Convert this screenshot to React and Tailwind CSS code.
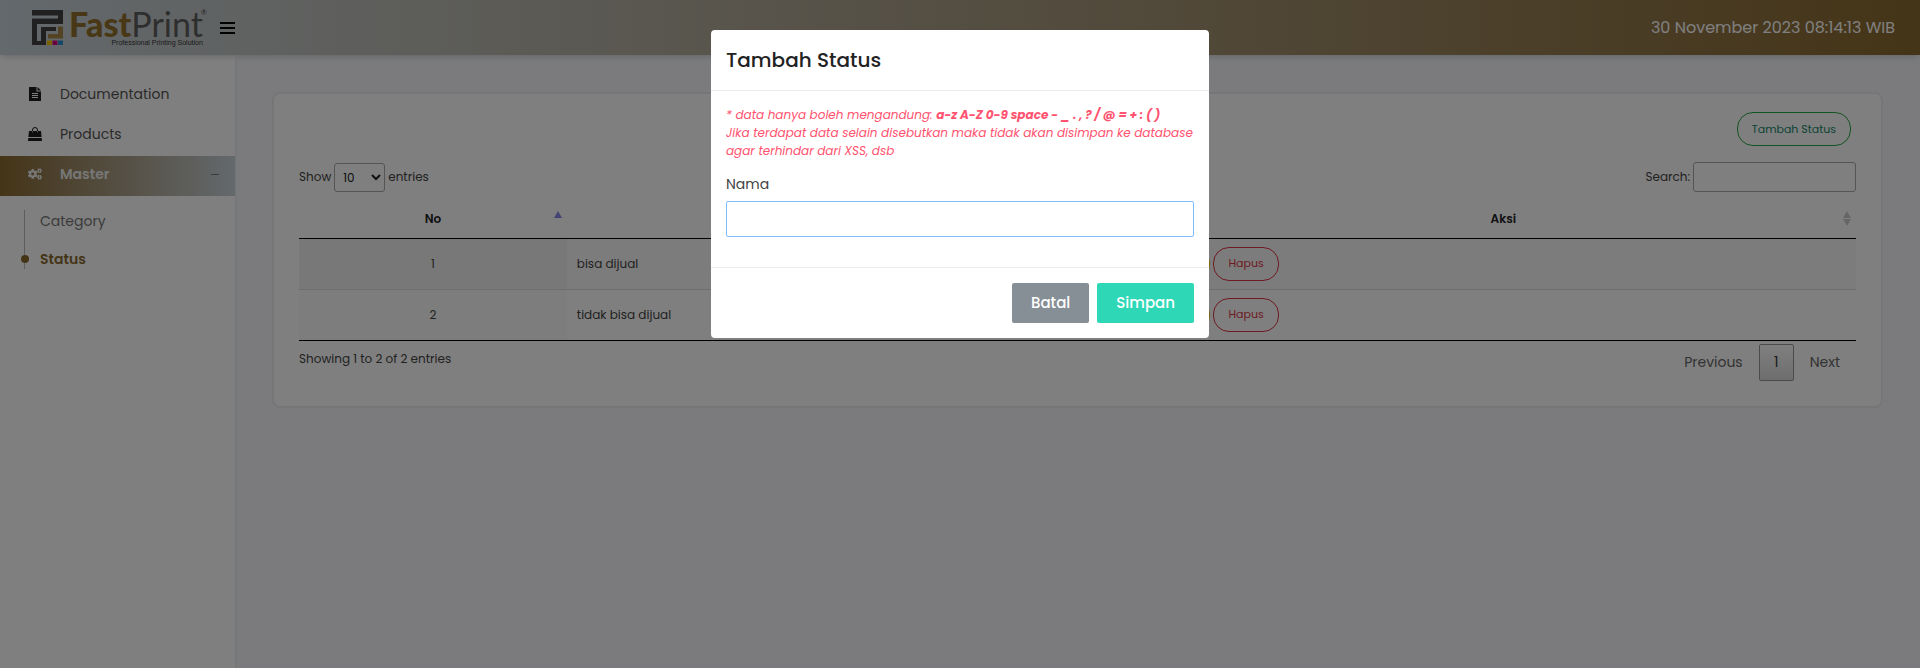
import { useState } from "react";
import { FaCogs } from "react-icons/fa";

function LogoMark() {
  return (
    <svg className="h-[35px] w-[31px]" viewBox="0 0 31 35" aria-hidden="true">
      <path fill="#424242" d="M0 0H31V14H5V31H9V17H24V21H14V35H0V8.500H26V5.500H0Z" />
      <path fill="#a8854a" d="M26 16.500H31V28.500H16V24H26Z" />
      <path fill="#f7c400" d="M15 30.500H20V35H15Z" />
      <path fill="#d6007e" d="M20.500 30.500H25.500V35H20.500Z" />
      <path fill="#2a8fd0" d="M26 30.500H31V35H26Z" />
    </svg>
  );
}

function Logo() {
  return (
    <a href="#" className="flex items-center gap-[6px] font-['Lato',sans-serif]">
      <LogoMark />
      <span className="relative flex flex-col">
        <span className="text-[34px] leading-[30px] text-[#5c5c5c]">
          <b className="font-black text-[#91702c]">Fast</b>Print
        </span>
        <span className="text-right font-['Liberation_Sans',sans-serif] text-[7px] leading-[8px] text-[#333]">
          Professional Printing Solution
        </span>
        <span className="absolute -right-[4px] -top-[1px] text-[7px] leading-[8px] text-[#444]">®</span>
      </span>
    </a>
  );
}

function FileIcon() {
  return (
    <svg className="h-[14px] w-[14px]" viewBox="0 0 14 14" aria-hidden="true">
      <path fill="#1c1c1c" d="M1.500 0H8.500V4.500H13V13.500Q13 14 12.500 14H1.500Q1 14 1 13.500V.500Q1 0 1.500 0ZM9.500 0L13 3.500H9.500Z" />
      <path stroke="#fff" d="M4 6.500H10M4 8.500H10M4 10.500H10" />
    </svg>
  );
}

function BagIcon() {
  return (
    <svg className="h-[14px] w-[14px]" viewBox="0 0 14 14" aria-hidden="true">
      <path fill="none" stroke="#1c1c1c" d="M4.500 5V3Q4.500 .500 7 .500Q9.500 .500 9.500 3V5" />
      <path fill="#1c1c1c" d="M1 4H13L13.600 10H.400ZM.300 11H13.700L14 14H0Z" />
      <path stroke="#fff" strokeWidth=".6" d="M4.500 4V5.500M9.500 4V5.500" />
    </svg>
  );
}

function Header() {
  return (
    <header className="relative z-10 flex h-[55px] items-center justify-between bg-linear-to-r from-[#c8d2d9] to-[#8a6a2f] pl-8 pr-[25px] shadow-md">
      <div className="flex items-center gap-[17px]">
        <Logo />
        <button type="button" aria-label="Toggle menu" className="flex flex-col gap-[3px]">
          <span className="h-[2px] w-[15px] bg-black" />
          <span className="h-[2px] w-[15px] bg-black" />
          <span className="h-[2px] w-[15px] bg-black" />
        </button>
      </div>
      <time className="text-[16px] text-white">30 November 2023 08:14:13 WIB</time>
    </header>
  );
}

const menuItem = "flex h-10 items-center pb-1 pl-7 pr-4 text-[14px]";

function Sidebar() {
  return (
    <nav className="w-[235px] shrink-0 bg-white pt-[21px] text-[#555] shadow-md">
      <a href="#" className={menuItem}>
        <FileIcon />
        <span className="ml-[18px]">Documentation</span>
      </a>
      <a href="#" className={menuItem}>
        <BagIcon />
        <span className="ml-[18px]">Products</span>
      </a>
      <a href="#" className={menuItem + " bg-linear-to-r from-[#8a6a2f] to-[#c8d2d9] font-semibold text-[#eee]"}>
        <FaCogs className="w-[14px] text-[14px]" />
        <span className="ml-[18px] grow">Master</span>
        <span className="h-px w-2 bg-[#777]" />
      </a>
      <div className="ml-6 mt-[14px] h-[59px] border-l border-[#bbb] text-[14px]">
        <a href="#" className="flex h-[22px] items-center pl-[15px] text-[#777]">Category</a>
        <a href="#" className="mt-4 flex h-[22px] items-center font-semibold text-[#8a6a2f]">
          <span className="-ml-1 mr-[11px] size-2 rounded-full bg-[#8a6a2f]" />
          Status
        </a>
      </div>
    </nav>
  );
}

function SortIcon({ ascending }) {
  return (
    <svg className="absolute right-[5px] top-[13px] h-[15px] w-2" viewBox="0 0 8 15" aria-hidden="true">
      <path d="M4 0L8 7H0Z" fill={ascending ? "#8a86e8" : "#ccc"} />
      {!ascending && <path d="M0 8H8L4 15Z" fill="#ccc" />}
    </svg>
  );
}

const rows = [
  { no: 1, nama: "bisa dijual" },
  { no: 2, nama: "tidak bisa dijual" },
];

const pill = "h-[34px] rounded-[16px] border px-[14px] text-[11px]";

function StatusTable() {
  return (
    <table className="w-full table-fixed border-collapse border-b border-black">
      <colgroup>
        <col className="w-[17.2%]" />
        <col className="w-[37.5%]" />
        <col />
      </colgroup>
      <thead>
        <tr className="h-10 border-b border-black text-[#222]">
          {["No", "Nama", "Aksi"].map((name) => (
            <th key={name} className="relative pt-[3px] font-semibold">
              {name}
              <SortIcon ascending={name === "No"} />
            </th>
          ))}
        </tr>
      </thead>
      <tbody>
        {rows.map((row, i) => (
          <tr key={row.no} className={i === 0 ? "h-[51px] bg-[#f9f9f9]" : "h-[51px] border-t border-[#ddd]"}>
            <td className={i === 0 ? "bg-[#f1f1f1] text-center" : "bg-[#fafafa] text-center"}>{row.no}</td>
            <td className="px-[10px]">{row.nama}</td>
            <td className="px-[10px]">
              <div className="flex gap-[3px]">
                <button type="button" className={pill + " border-[#ffc107] text-[#c79500]"}>Edit</button>
                <button type="button" className={pill + " border-[#dc3545] text-[#dc3545]"}>Hapus</button>
              </div>
            </td>
          </tr>
        ))}
      </tbody>
    </table>
  );
}

function StatusCard() {
  return (
    <section className="rounded-lg border-2 border-[#ededf2] bg-white px-[25px] pb-[25px] pt-[18px] text-[12px] text-[#444]">
      <div className="flex justify-end pr-[5px]">
        <button type="button" className={pill + " border-[#28a745] text-[#16876a]"}>Tambah Status</button>
      </div>
      <div className="mt-4 flex items-center justify-between">
        <label className="flex items-center gap-[3px]">
          Show
          <select defaultValue="10" className="h-[29px] w-[51px] rounded-[3px] border border-[#aaa] bg-transparent pl-1 text-[12px] text-[#222]">
            <option>10</option>
            <option>25</option>
            <option>50</option>
          </select>
          entries
        </label>
        <label className="flex items-center gap-[3px]">
          Search:
          <input type="search" className="h-[30px] w-[163px] rounded-[3px] border border-[#aaa] px-2" />
        </label>
      </div>
      <div className="mt-[6px]">
        <StatusTable />
      </div>
      <div className="flex items-start justify-between pt-[3px]">
        <p className="pt-[6px]">Showing 1 to 2 of 2 entries</p>
        <div className="flex items-center text-[14px] text-[#666]">
          <button type="button" className="h-[37px] px-4">Previous</button>
          <button type="button" className="h-[37px] w-[35px] rounded-[2px] border border-[#979797] bg-linear-to-b from-white to-[#dcdcdc] text-[#333]">1</button>
          <button type="button" className="h-[37px] px-4">Next</button>
        </div>
      </div>
    </section>
  );
}

function StatusDialog() {
  const [nama, setNama] = useState("");
  return (
    <div className="fixed inset-0 z-20 flex items-start justify-center bg-black/50 pt-[30px]">
      <form role="dialog" aria-labelledby="dialog-title" className="w-[498px] rounded-[4px] bg-white" onSubmit={(e) => e.preventDefault()}>
        <h2 id="dialog-title" className="h-[61px] border-b border-[#e9ecef] px-[15px] pt-[15px] text-[20px] font-medium leading-[30px] text-[#222]">
          Tambah Status
        </h2>
        <div className="px-[15px] pb-[30px] pt-[15px]">
          <p className="text-[12px] italic leading-[18px] text-[#ff5370]">
            * data hanya boleh mengandung: <b className="font-bold">a-z A-Z 0-9 space - _ . , ? / @ = + : ( )</b>
            <br />
            Jika terdapat data selain disebutkan maka tidak akan disimpan ke database agar terhindar dari XSS, dsb
          </p>
          <label htmlFor="nama" className="mt-[14px] block text-[14px] leading-[20px] text-[#444]">Nama</label>
          <input
            id="nama"
            type="text"
            value={nama}
            onChange={(e) => setNama(e.target.value)}
            className="mt-[7px] h-[36px] w-full rounded-[2px] border border-[#80bdff] px-3 text-[14px] outline-none"
          />
        </div>
        <div className="flex justify-end gap-2 border-t border-[#e9ecef] p-[15px] text-[15px] font-medium text-white">
          <button type="button" className="h-10 rounded-[2px] bg-[#868e96] px-[19px]">Batal</button>
          <button type="submit" className="h-10 rounded-[2px] bg-[#2ed8b6] px-[19px]">Simpan</button>
        </div>
      </form>
    </div>
  );
}

export default function App() {
  return (
    <div className="flex min-h-screen flex-col bg-[#f6f7fb] font-['Poppins','Inter',sans-serif]">
      <Header />
      <div className="flex grow">
        <Sidebar />
        <main className="grow px-[37px] pt-[37px]">
          <StatusCard />
        </main>
      </div>
      <StatusDialog />
    </div>
  );
}
